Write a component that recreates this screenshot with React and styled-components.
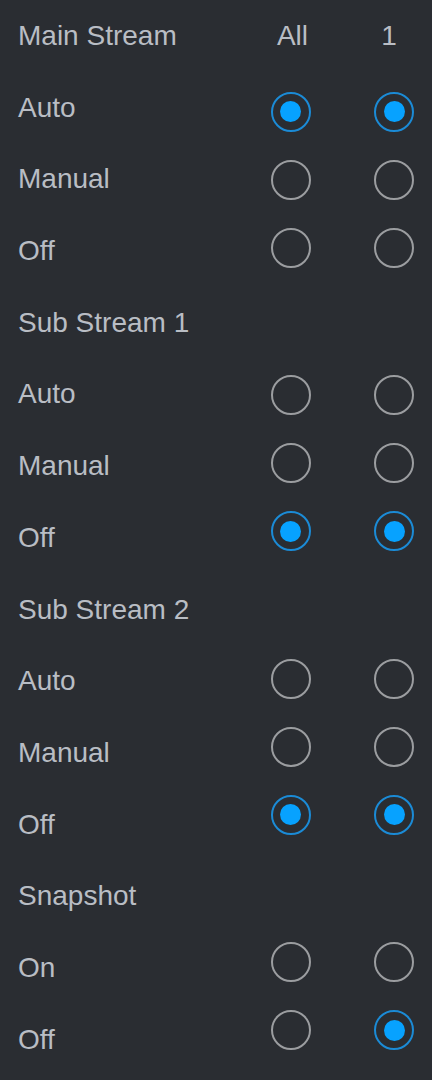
import styled, { createGlobalStyle } from "styled-components";

const GlobalStyle = createGlobalStyle`
  html, body {
    margin: 0;
    padding: 0;
    background: #2a2d32;
  }
  body {
    font-family: "Liberation Sans", Arial, sans-serif;
  }
`;

const groups = [
  { title: "Main Stream", options: ["Auto", "Manual", "Off"], all: 0, one: 0 },
  { title: "Sub Stream 1", options: ["Auto", "Manual", "Off"], all: 2, one: 2 },
  { title: "Sub Stream 2", options: ["Auto", "Manual", "Off"], all: 2, one: 2 },
  { title: "Snapshot", options: ["On", "Off"], all: -1, one: 1 },
];

const Radio = ({ checked }) => (
  <RadioCell>
    <RadioRing $checked={checked}>{checked && <RadioDot />}</RadioRing>
  </RadioCell>
);

const OptionColumn = ({ head, field, shift = 0 }) => (
  <Column>
    <HeadCell $shift={shift}>{head}</HeadCell>
    {groups.map((g) => (
      <RadioGroup key={g.title}>
        {g.options.map((o, i) => (
          <Radio key={o} checked={g[field] === i} />
        ))}
      </RadioGroup>
    ))}
  </Column>
);

const App = () => {
  return (
    <>
      <GlobalStyle />
      <Panel>
        <LabelColumn>
          {groups.map((g) => (
            <div key={g.title}>
              <Label>{g.title}</Label>
              {g.options.map((o) => (
                <Label key={o}>{o}</Label>
              ))}
            </div>
          ))}
        </LabelColumn>
        <OptionColumn head="All" field="all" shift={2} />
        <OptionColumn head="1" field="one" shift={-5} />
      </Panel>
    </>
  );
};

export default App;

const Panel = styled.div`
  display: flex;
  width: 432px;
  height: 1080px;
  overflow: hidden;
  box-sizing: border-box;
  padding: 0 18px 0 18px;
  gap: 63.5px;
  background: #2a2d32;
`;

const LabelColumn = styled.div`
  flex: 1;
`;

const Label = styled.div`
  height: 71.7px;
  line-height: 71.7px;
  font-size: 28px;
  color: #b9bdc4;
  white-space: nowrap;
`;

const Column = styled.div`
  width: 40px;
  display: flex;
  flex-direction: column;
  align-items: center;
`;

const HeadCell = styled.div`
  height: 71.7px;
  line-height: 71.7px;
  font-size: 28px;
  color: #b9bdc4;
  white-space: nowrap;
  margin-bottom: 6.3px;
  transform: translateX(${({ $shift }) => $shift}px);
`;

const RadioGroup = styled.div`
  display: flex;
  flex-direction: column;
  margin-bottom: 79.5px;

  &:last-child {
    margin-bottom: 0;
  }
`;

const RadioCell = styled.div`
  height: 68px;
  display: flex;
  align-items: center;
  justify-content: center;
`;

const RadioRing = styled.div`
  width: 40px;
  height: 40px;
  box-sizing: border-box;
  border-radius: 50%;
  border: 2px solid ${({ $checked }) => ($checked ? "#1b8bd6" : "#9b9da0")};
  display: flex;
  align-items: center;
  justify-content: center;
`;

const RadioDot = styled.div`
  width: 21px;
  height: 21px;
  border-radius: 50%;
  background: #07a2ff;
`;
